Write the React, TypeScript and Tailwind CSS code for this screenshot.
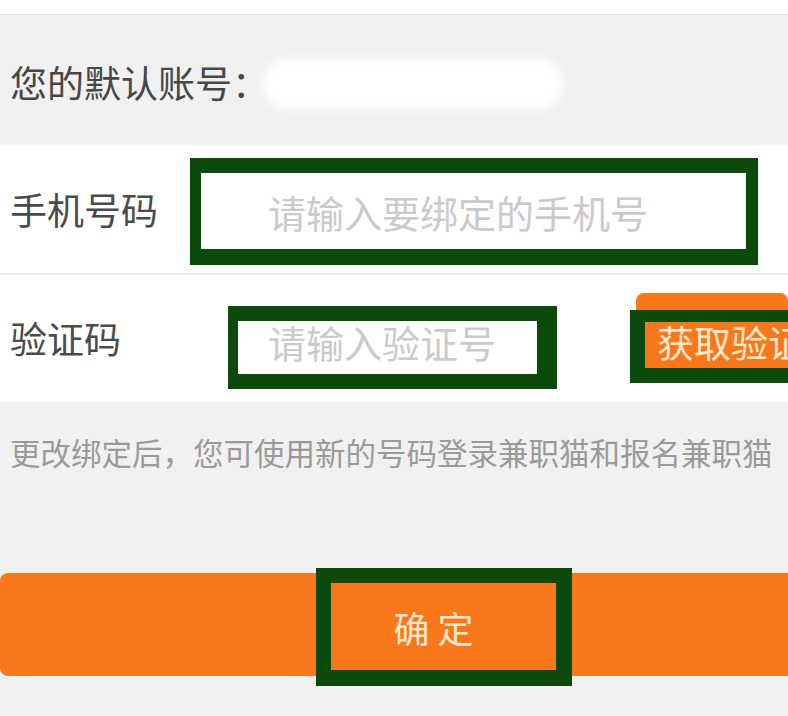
const font = 'font-["Noto_Sans_CJK_SC","Noto_Sans",sans-serif]'

export default function App() {
  return (
    <div className={`w-[788px] h-[716px] overflow-hidden bg-[#f1f1f1] ${font}`}>
      {/* top strip */}
      <div className="h-[15px] bg-white border-b border-[#e6e6e6]" />

      {/* default account */}
      <div className="h-[130px] flex items-center pl-[10px] text-[37px] text-[#474747]">
        <span className="mt-[6px]">您的默认账号：</span>
        <span className="-ml-[6px] w-[300px] h-[50px] mt-[8px] bg-white rounded-full blur-[5px]" />
      </div>

      {/* phone row */}
      <div className="h-[128px] bg-white flex pt-[13px]">
        <div className="w-[190px] pl-[10px] self-center -mt-[12px] text-[37px] text-[#4a4a4a]">手机号码</div>
        <div className="w-[568px] h-[107px] border-[#0b4a0b] border-l-[11px] border-t-[15px] border-r-[12px] border-b-[16px] bg-white flex items-center pl-[67px] text-[38px] text-[#cacaca]">
          请输入要绑定的手机号
        </div>
      </div>
      <div className="h-[2px] bg-[#ebebeb]" />

      {/* code row */}
      <div className="h-[127px] bg-white flex">
        <div className="w-[228px] pl-[10px] self-center text-[37px] text-[#4a4a4a]">验证码</div>
        <div className="mt-[31px] w-[329px] h-[83px] border-[#0b4a0b] border-l-[10px] border-t-[15px] border-r-[20px] border-b-[15px] bg-white flex items-center pl-[30px] pb-[12px] text-[38px] text-[#cacaca]">
          请输入验证号
        </div>
        <div className="ml-[73px] mt-[18px] w-[158px] flex flex-col">
          <div className="ml-[6px] h-[17px] rounded-t-[8px] bg-[#fa781c]" />
          <div className="h-[73px] border-[#0b4a0b] border-l-[15px] border-t-[12px] border-b-[15px] bg-[#fa781c] flex items-center pl-[12px] pb-[4px] overflow-hidden whitespace-nowrap text-[37px] text-[#fde8cc]">
            获取验证码
          </div>
        </div>
      </div>

      {/* hint */}
      <div className="pt-[28px] pl-[10px] text-[30.5px] leading-[45px] text-[#9a9a9a] whitespace-nowrap">
        更改绑定后，您可使用新的号码登录兼职猫和报名兼职猫
      </div>

      {/* confirm */}
      <div className="mt-[98px] h-[103px] bg-[#fa781c] rounded-l-[8px] flex">
        <div className="ml-[316px] -mt-[5px] w-[256px] h-[118px] border-[#0b4a0b] border-l-[15px] border-t-[15px] border-r-[16px] border-b-[16px] bg-[#fa781c] flex items-center justify-center pr-[20px] text-[36px] text-[#fde8cc]">
          确 定
        </div>
      </div>
    </div>
  )
}
